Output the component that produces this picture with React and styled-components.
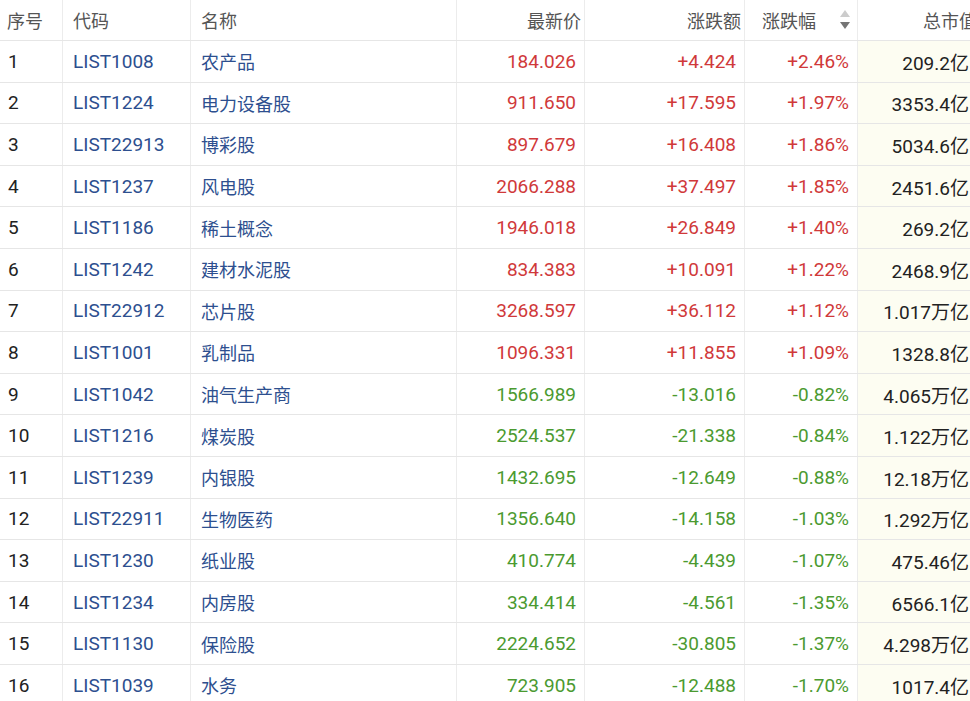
import React from 'react'
import styled, { createGlobalStyle } from 'styled-components'

const GlobalStyle = createGlobalStyle`
  html, body {
    margin: 0;
    padding: 0;
    background: #ffffff;
    overflow: hidden;
  }
  body {
    font-family: Roboto, "Noto Sans CJK SC", sans-serif;
  }
`

const COLS = '63px 128px 266px 128px 160px 113px 122px'

const Table = styled.div`
  width: 980px;
  display: flex;
  flex-direction: column;
`
const HeadRow = styled.div`
  display: grid;
  grid-template-columns: ${COLS};
  height: 40px;
  border-bottom: 1px solid #e6e6e6;
  background: #ffffff;
`
const Row = styled.div`
  display: grid;
  grid-template-columns: ${COLS};
  height: 40.6px;
  border-bottom: 1px solid #e6e6e6;
`
const HeadCell = styled.div`
  display: flex;
  align-items: center;
  justify-content: ${p => (p.$right ? 'flex-end' : 'flex-start')};
  padding: ${p => (p.$right ? '0 3px 0 0' : `0 0 0 ${p.$pl || 10}px`)};
  font-size: 18px;
  color: #555555;
  border-right: ${p => (p.$last ? 'none' : '1px solid #ececec')};
  white-space: nowrap;
`
const SortCell = styled(HeadCell)`
  justify-content: space-between;
  padding: 0 6px 0 17px;
`
const Cell = styled.div`
  display: flex;
  align-items: center;
  justify-content: ${p => (p.$right ? 'flex-end' : 'flex-start')};
  padding: ${p => (p.$right ? `0 ${p.$pr || 8}px 0 0` : `0 0 0 ${p.$pl || 10}px`)};
  font-size: 19px;
  color: ${p => p.$color || '#222222'};
  background: ${p => p.$bg || 'transparent'};
  border-right: ${p => (p.$last ? 'none' : '1px solid #ececec')};
  white-space: nowrap;
`
const Name = styled.span`
  font-size: 18px;
`

const SortIcon = () => (
  <svg width="12" height="24" viewBox="0 0 12 24">
    <polygon points="6,2 11,9 1,9" fill="#cccccc" />
    <polygon points="1,14 11,14 6,21" fill="#757575" />
  </svg>
)

const RED = '#d0393a'
const GREEN = '#4b9a30'
const BLUE = '#2d4f8f'

const rows = [
  ['LIST1008', '农产品', '184.026', '+4.424', '+2.46%', '209.2亿'],
  ['LIST1224', '电力设备股', '911.650', '+17.595', '+1.97%', '3353.4亿'],
  ['LIST22913', '博彩股', '897.679', '+16.408', '+1.86%', '5034.6亿'],
  ['LIST1237', '风电股', '2066.288', '+37.497', '+1.85%', '2451.6亿'],
  ['LIST1186', '稀土概念', '1946.018', '+26.849', '+1.40%', '269.2亿'],
  ['LIST1242', '建材水泥股', '834.383', '+10.091', '+1.22%', '2468.9亿'],
  ['LIST22912', '芯片股', '3268.597', '+36.112', '+1.12%', '1.017万亿'],
  ['LIST1001', '乳制品', '1096.331', '+11.855', '+1.09%', '1328.8亿'],
  ['LIST1042', '油气生产商', '1566.989', '-13.016', '-0.82%', '4.065万亿'],
  ['LIST1216', '煤炭股', '2524.537', '-21.338', '-0.84%', '1.122万亿'],
  ['LIST1239', '内银股', '1432.695', '-12.649', '-0.88%', '12.18万亿'],
  ['LIST22911', '生物医药', '1356.640', '-14.158', '-1.03%', '1.292万亿'],
  ['LIST1230', '纸业股', '410.774', '-4.439', '-1.07%', '475.46亿'],
  ['LIST1234', '内房股', '334.414', '-4.561', '-1.35%', '6566.1亿'],
  ['LIST1130', '保险股', '2224.652', '-30.805', '-1.37%', '4.298万亿'],
  ['LIST1039', '水务', '723.905', '-12.488', '-1.70%', '1017.4亿'],
]

const App = () => {
  return (
    <>
      <GlobalStyle />
      <Table>
        <HeadRow>
          <HeadCell $pl={7}>序号</HeadCell>
          <HeadCell>代码</HeadCell>
          <HeadCell>名称</HeadCell>
          <HeadCell $right>最新价</HeadCell>
          <HeadCell $right>涨跌额</HeadCell>
          <SortCell>
            涨跌幅
            <SortIcon />
          </SortCell>
          <HeadCell $right $last>总市值</HeadCell>
        </HeadRow>
        {rows.map((r, i) => {
          const color = r[3].startsWith('-') ? GREEN : RED
          return (
            <Row key={r[0]}>
              <Cell $pl={8}>{i + 1}</Cell>
              <Cell $color={BLUE}>{r[0]}</Cell>
              <Cell $color={BLUE}><Name>{r[1]}</Name></Cell>
              <Cell $right $color={color}>{r[2]}</Cell>
              <Cell $right $color={color}>{r[3]}</Cell>
              <Cell $right $color={color}>{r[4]}</Cell>
              <Cell $right $pr={11} $bg="#fdfdf2" $last>{r[5]}</Cell>
            </Row>
          )
        })}
      </Table>
    </>
  )
}

export default App
